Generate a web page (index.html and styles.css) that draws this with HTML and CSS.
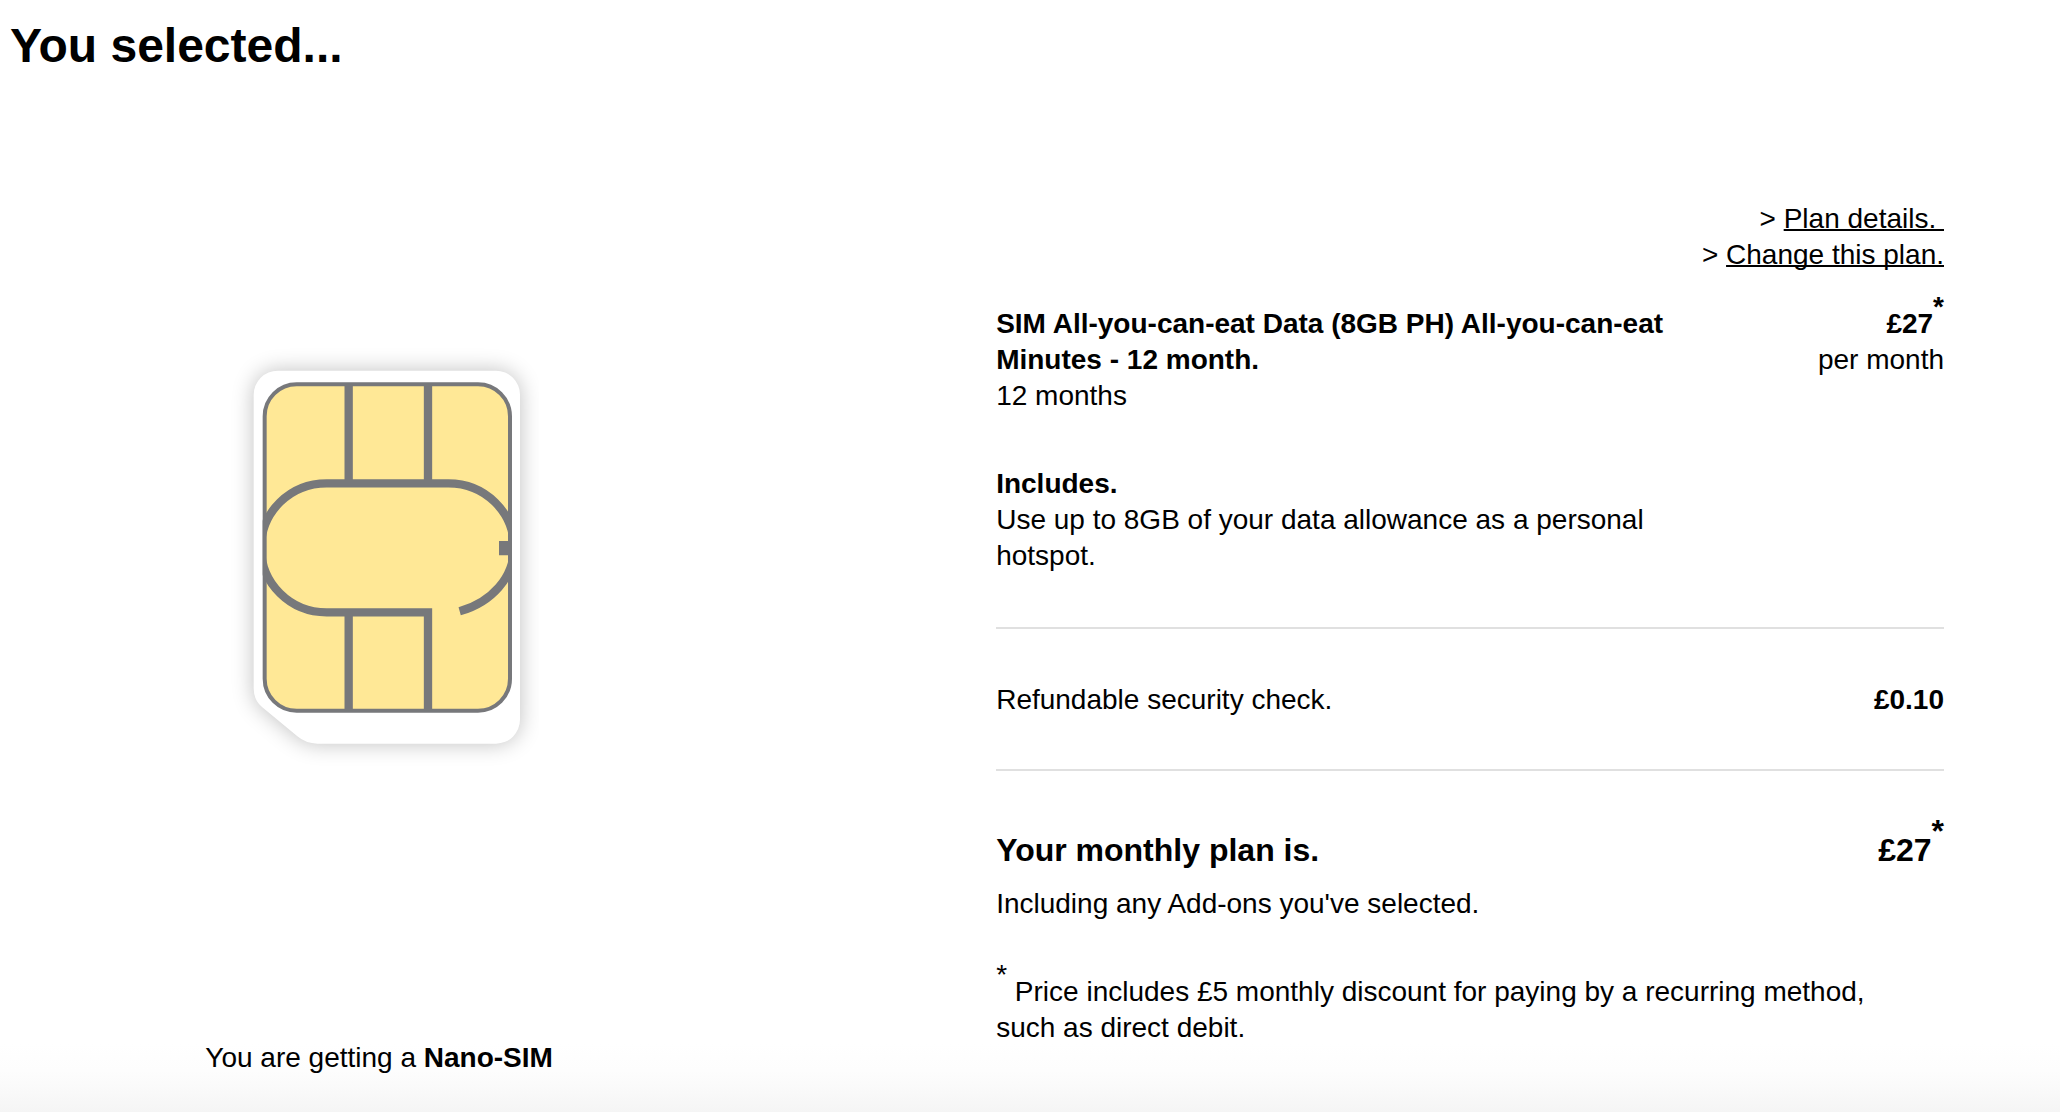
FILE: index.html
```
<!DOCTYPE html>
<html lang="en">
<head>
    <meta charset="UTF-8">
    <meta name="viewport" content="width=device-width, initial-scale=1.0">
    <title>You selected...</title>
    <link rel="stylesheet" href="styles.css">
</head>
<body>

<h1>You selected...</h1>

<main class="summary">
    <section class="product">
        <svg class="sim" viewBox="-33 0 960 1290" role="img" aria-label="Nano-SIM">
            <defs>
                <filter id="shadow" x="-20%" y="-20%" width="140%" height="140%">
                    <feGaussianBlur stdDeviation="34"/>
                </filter>
                <clipPath id="chip">
                    <rect x="98" y="127" width="748" height="991" rx="102"/>
                </clipPath>
            </defs>
            <!-- card -->
            <path class="sim-shadow" filter="url(#shadow)" d="M143 92H798A72 72 0 0 1 870 164V1139A72 72 0 0 1 798 1211H262Q228 1211 202 1189L96 1101Q71 1080 71 1046V164A72 72 0 0 1 143 92Z"/>
            <path class="sim-card" d="M143 92H798A72 72 0 0 1 870 164V1139A72 72 0 0 1 798 1211H262Q228 1211 202 1189L96 1101Q71 1080 71 1046V164A72 72 0 0 1 143 92Z"/>
            <!-- chip -->
            <rect class="sim-chip" x="104" y="133" width="736" height="979" rx="96"/>
            <g clip-path="url(#chip)">
                <path class="sim-line" d="M356 133V430M594 133V430M356 817V1112M594 1112V817H290C180 817 93 730 93 623C93 516 180 430 290 430H655C765 430 852 516 852 623C852 712 785 787 689 814"/>
                <path class="sim-notch" d="M807 603H846V646H807Z"/>
            </g>
        </svg>
        <p>You are getting a <strong>Nano-SIM</strong></p>
    </section>

    <section class="details">
        <ul class="links">
            <li>&gt; <a href="#">Plan details.&nbsp;</a></li>
            <li>&gt; <a href="#">Change this plan.</a></li>
        </ul>

        <div class="row plan">
            <div class="plan-name">
                <strong>SIM All-you-can-eat Data (8GB PH) All-you-can-eat Minutes - 12 month.</strong>
                <p>12 months</p>
            </div>
            <div class="price">
                <strong>£27<sup>*</sup></strong>
                <p>per month</p>
            </div>
        </div>

        <div class="includes">
            <strong>Includes.</strong>
            <p>Use up to 8GB of your data allowance as a personal hotspot.</p>
        </div>

        <div class="row security">
            <p>Refundable security check.</p>
            <strong>£0.10</strong>
        </div>

        <div class="row total">
            <h2>Your monthly plan is.</h2>
            <strong>£27<sup>*</sup></strong>
        </div>
        <p>Including any Add-ons you've selected.</p>

        <p class="note"><sup>*</sup> Price includes £5 monthly discount for paying by a recurring method, such as direct debit.</p>
    </section>
</main>

</body>
</html>
```
FILE: styles.css
```
* {
    box-sizing: border-box;
}

body {
    margin: 0;
    min-height: 100vh;
    padding: 18px 0 36px;
    font-family: "Helvetica Neue", Helvetica, "Liberation Sans", Arial, sans-serif;
    font-size: 28px;
    line-height: 36px;
    color: #000;
    background: linear-gradient(to top, #f5f5f5, #fafafa 24px, #fdfdfd 42px, #fff 68px);
}

h1, h2, p, ul {
    margin: 0;
    padding: 0;
}

h1 {
    padding-left: 10px;
    font-size: 48px;
    line-height: 56px;
}

sup {
    font-size: 100%;
    line-height: 0;
    vertical-align: 0.6em;
}

.summary {
    display: flex;
    padding: 127px 116px 0 0;
}

/* left side */
.product {
    width: 39%;
    display: flex;
    flex-direction: column;
    align-items: center;
    gap: 270px;
    padding-top: 139px;
    text-align: center;
}

.sim {
    width: 320px;
    height: 430px;
}

.sim-shadow {
    fill: #000;
    opacity: 0.25;
}

.sim-card {
    fill: #fff;
}

.sim-chip {
    fill: #ffe896;
    stroke: #77787b;
    stroke-width: 12px;
}

.sim-line {
    fill: none;
    stroke: #77787b;
    stroke-width: 25px;
}

.sim-notch {
    fill: #77787b;
}

/* right side */
.details {
    flex: 1;
    margin-left: 238px;
}

.links {
    list-style: none;
    text-align: right;
}

.links a {
    color: #000;
    text-decoration-thickness: 2px;
    text-decoration-skip-ink: none;
}

.row {
    display: flex;
    justify-content: space-between;
}

.plan {
    margin-top: 33px;
}

.plan-name {
    width: 690px;
}

.price {
    text-align: right;
}

.includes {
    width: 690px;
    margin-top: 52px;
}

.security {
    margin-top: 53px;
    padding: 53px 0 51px;
    border-top: 2px solid #e0e0e0;
    border-bottom: 2px solid #e0e0e0;
}

.total {
    margin: 59px 0 16px;
    font-size: 32px;
    line-height: 40px;
}

.total h2 {
    font-size: 32px;
}

.note {
    margin-top: 52px;
    padding-right: 40px;
}
```
